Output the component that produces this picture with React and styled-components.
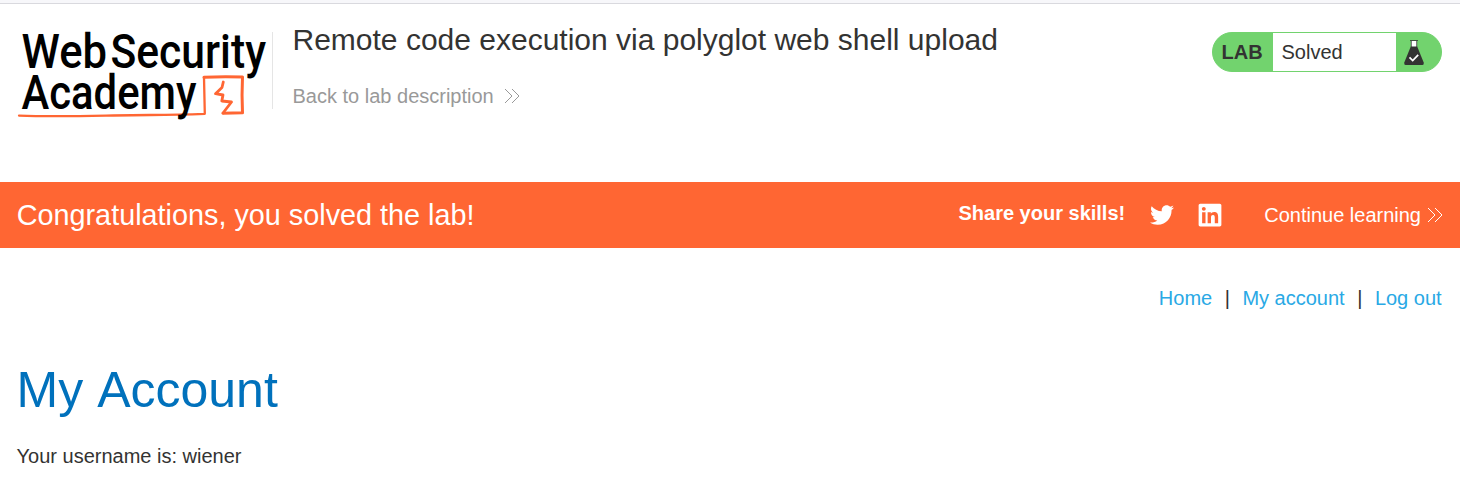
import React from 'react';
import styled, { createGlobalStyle } from 'styled-components';
import { FaTwitter, FaLinkedin } from 'react-icons/fa';

const GlobalStyle = createGlobalStyle`
  *, *::before, *::after { box-sizing: border-box; }
  body {
    margin: 0;
    background: #fff;
    color: #333332;
    font: 20px/24px Arial, "Liberation Sans", sans-serif;
    overflow: hidden;
  }
  h1, h2, h4, p { margin: 0; font-weight: 400; }
  a { text-decoration: none; color: inherit; }
`;

const Page = styled.div`
  height: 478px;
  overflow: hidden;
`;

const TopEdge = styled.div`
  height: 4px;
  background: #f7f7fa;
  border-bottom: 1px solid #d9d9de;
`;

const Header = styled.header`
  display: flex;
  align-items: flex-start;
  height: 178px;
  padding: 10px 18px 0 17px;
`;

const Logo = styled.svg`
  display: block;
  width: 255px;
  height: 112px;
  flex: none;
  overflow: visible;
`;

const TitleBlock = styled.div`
  flex: 1;
  height: 77px;
  margin-top: 18px;
  padding-left: 19.5px;
  border-left: 1px solid #e5e5e5;
`;

const Title = styled.h2`
  margin-top: -10px;
  font-size: 30px;
  line-height: 36px;
`;

const BackLink = styled.a`
  display: flex;
  align-items: center;
  gap: 10px;
  margin-top: 26px;
  color: #999;
`;

const Chevrons = styled.svg`
  display: block;
  width: 16px;
  height: 16px;
  fill: none;
  stroke: currentColor;
  stroke-width: 1;
`;

const LabStatus = styled.div`
  display: flex;
  width: 230px;
  height: 40px;
  margin-top: 18px;
  border: 1px solid #72d36e;
  border-radius: 20px;
  overflow: hidden;
  background: #72d36e;
  line-height: 38px;
`;

const LabTag = styled.span`
  width: 60px;
  padding-left: 8.5px;
  font-weight: 700;
`;

const LabState = styled.span`
  width: 123px;
  padding-left: 8.5px;
  background: #fff;
`;

const Flask = styled.svg`
  display: block;
  width: 22px;
  height: 28px;
  margin: 6px 0 0 7px;
`;

const Banner = styled.section`
  display: flex;
  align-items: center;
  height: 66px;
  padding: 0 17px 0 16.7px;
  background: #ff6633;
  color: #fff;
`;

const BannerTitle = styled.h4`
  flex: 1;
  font-size: 28.8px;
  line-height: 34px;
`;

const Share = styled.div`
  display: flex;
  align-items: center;
  margin-right: 41px;
  font-weight: 700;
`;

const ShareLabel = styled.span`
  margin-right: 25px;
  padding-bottom: 4px;
`;

const ShareIcon = styled.a`
  display: flex;
  margin-left: ${(p) => p.$gap || 0}px;
  padding-bottom: 1px;
`;

const ContinueLink = styled.a`
  display: flex;
  align-items: center;
  gap: 6px;
`;

const Nav = styled.nav`
  display: flex;
  justify-content: flex-end;
  gap: 12.5px;
  padding: 38px 18.4px 0 0;
`;

const NavLink = styled.a`
  color: #29a9e5;
`;

const Content = styled.main`
  padding: 50px 16.6px 0;
`;

const Heading = styled.h1`
  font-size: 50px;
  line-height: 60px;
  font-kerning: none;
  color: #0071bc;
`;

const Username = styled.p`
  margin-top: 24px;
`;

function DoubleChevron() {
  return (
    <Chevrons viewBox="0 0 16 16" aria-hidden="true">
      <path d="M1 1 L8 8 L1 15 M8 1 L15 8 L8 15" />
    </Chevrons>
  );
}

function AcademyLogo() {
  return (
    <Logo viewBox="17 14 255 112" role="img" aria-label="Web Security Academy">
      <g fill="none" stroke="#ff6633" strokeLinecap="round" strokeLinejoin="round">
        <path d="M19 115.6 C65 117.4 110 115 150 115 Q180 114.8 204.8 113.8 L204 77.3" strokeWidth="2.3" />
        <path d="M204 77.3 Q222 76.2 242.5 77 Q241.6 95 242.5 112.8 L223 113.2" strokeWidth="3" />
        <path d="M223.3 82 L222 87.5 L215.5 93.7 L223 95 L221.8 101 L231.5 102 L223 113" strokeWidth="2.8" />
      </g>
      <g fill="#000" fontFamily="Roboto, sans-serif" fontWeight="500" fontSize="48.5">
        <text x="21.5" y="68" textLength="85.5" lengthAdjust="spacingAndGlyphs">Web</text>
        <text x="110.5" y="68" textLength="155.5" lengthAdjust="spacingAndGlyphs">Security</text>
        <text x="21.5" y="108.6" textLength="175" lengthAdjust="spacingAndGlyphs">Academy</text>
      </g>
    </Logo>
  );
}

export default function App() {
  return (
    <Page>
      <GlobalStyle />
      <TopEdge />
      <Header>
        <AcademyLogo />
        <TitleBlock>
          <Title>Remote code execution via polyglot web shell upload</Title>
          <BackLink>
            Back to lab description
            <DoubleChevron />
          </BackLink>
        </TitleBlock>
        <LabStatus>
          <LabTag>LAB</LabTag>
          <LabState>Solved</LabState>
          <Flask viewBox="0 0 22 28" aria-hidden="true">
            <path d="M8 2 H14 V8 H8 Z" fill="#fff" />
            <path d="M7 1.5 H15 M8.3 2 V8 M13.7 2 V8" fill="none" stroke="#333332" strokeWidth="0.8" />
            <path d="M7.8 7.5 H14.2 L20.8 23.8 Q21 26 19.5 26 H2.5 Q1 26 1.2 23.8 Z" fill="#333332" />
            <path d="M6.5 18.4 L9.7 21.6 L15.2 15.8" fill="none" stroke="#fff" strokeWidth="1.7" />
          </Flask>
        </LabStatus>
      </Header>
      <Banner>
        <BannerTitle>Congratulations, you solved the lab!</BannerTitle>
        <Share>
          <ShareLabel>Share your skills!</ShareLabel>
          <ShareIcon><FaTwitter size={24} /></ShareIcon>
          <ShareIcon $gap={23}><FaLinkedin size={26} /></ShareIcon>
        </Share>
        <ContinueLink>
          Continue learning
          <DoubleChevron />
        </ContinueLink>
      </Banner>
      <Nav>
        <NavLink>Home</NavLink>
        <span>|</span>
        <NavLink>My account</NavLink>
        <span>|</span>
        <NavLink>Log out</NavLink>
      </Nav>
      <Content>
        <Heading>My Account</Heading>
        <Username>Your username is: wiener</Username>
      </Content>
    </Page>
  );
}
